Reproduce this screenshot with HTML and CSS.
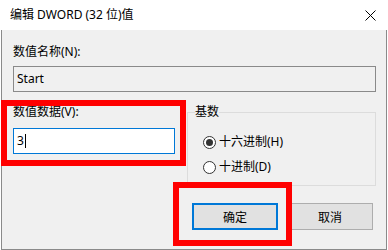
FILE: index.html
```html
<!DOCTYPE html>
<html lang="zh-CN">
<head>
<meta charset="utf-8">
<title>编辑 DWORD (32 位)值</title>
<link rel="stylesheet" href="styles.css">
</head>
<body>
<div class="dialog">
  <div class="titlebar">
    <span class="title">编辑 DWORD (32 位)值</span>
    <svg class="close" width="11" height="11" viewBox="0 0 11 11" aria-hidden="true">
      <path d="M0.5 0.5 L10.5 10.5 M10.5 0.5 L0.5 10.5" stroke="#000" stroke-width="1" fill="none"/>
    </svg>
  </div>
  <div class="content">
    <div class="label">数值名称(N):</div>
    <div class="field readonly">Start</div>
    <div class="row">
      <div class="value-col">
        <div class="label">数值数据(V):</div>
        <div class="field edit">3<span class="caret"></span></div>
      </div>
      <fieldset class="group">
        <legend>基数</legend>
        <div class="radio"><span class="dot checked"></span><span>十六进制(H)</span></div>
        <div class="radio second"><span class="dot"></span><span>十进制(D)</span></div>
      </fieldset>
    </div>
    <div class="buttons">
      <div class="btn default">确定</div>
      <div class="btn">取消</div>
    </div>
  </div>
  <div class="mark mark-value"></div>
  <div class="mark mark-ok"></div>
</div>
</body>
</html>
```

FILE: styles.css
```css
html, body {
  margin: 0;
  padding: 0;
  background: #ffffff;
}

.dialog {
  position: relative;
  width: 388px;
  height: 250px;
  font-family: "Noto Sans", "Noto Sans CJK SC", sans-serif;
  font-size: 12px;
  color: #000;
  overflow: hidden;
}

.titlebar {
  height: 30px;
  background: #ffffff;
  display: flex;
  align-items: center;
  justify-content: space-between;
  padding: 0 12px 0 10px;
  box-sizing: border-box;
}

.title {
  line-height: 16px;
}

.close {
  display: block;
  margin-top: 0;
}

.content {
  margin-left: 1px;
  width: 386px;
  height: 220px;
  box-sizing: border-box;
  border: 1px solid #8a8a8a;
  border-top: 0;
  background: #f0f0f0;
  padding: 14px 10px 0 11px;
}

.label {
  line-height: 16px;
  height: 16px;
}

.field {
  margin-top: 6px;
  height: 26px;
  box-sizing: border-box;
  border: 1px solid #8a8a8a;
  padding-left: 3px;
  line-height: 24px;
  display: flex;
  align-items: center;
}

.field.readonly {
  background: #f0f0f0;
}

.field.edit {
  margin-top: 8px;
  background: #ffffff;
  border-color: #0078d7;
}

.caret {
  display: inline-block;
  width: 1px;
  height: 14px;
  background: #000;
  margin-left: 1px;
}

.row {
  display: flex;
  gap: 12px;
}

.value-col {
  width: 162px;
  padding-top: 12px;
}

.group {
  flex: 1;
  min-width: 0;
  margin: 12px 0 0 0;
  padding: 14px 0 10px 7px;
  border: 1px solid #dcdcdc;
}

.group legend {
  padding: 0;
  line-height: 16px;
}

.radio {
  display: flex;
  align-items: center;
  height: 16px;
  line-height: 16px;
  margin-left: 8px;
  gap: 3px;
}

.radio.second {
  margin-top: 9px;
}

.dot {
  width: 13px;
  height: 13px;
  box-sizing: border-box;
  border: 1px solid #333333;
  border-radius: 50%;
  background: #ffffff;
  display: flex;
  align-items: center;
  justify-content: center;
  flex: none;
}

.dot.checked::after {
  content: "";
  width: 7px;
  height: 7px;
  border-radius: 50%;
  background: #333333;
}

.buttons {
  display: flex;
  justify-content: flex-end;
  gap: 9px;
  margin-top: 17px;
  margin-right: 3px;
}

.btn {
  width: 86px;
  height: 27px;
  box-sizing: border-box;
  border: 1px solid #adadad;
  background: #e1e1e1;
  display: flex;
  align-items: center;
  justify-content: center;
}

.btn.default {
  border: 2px solid #0078d7;
}

.mark {
  position: absolute;
  box-sizing: border-box;
  border: 6px solid #ff0000;
}

.mark-value {
  left: 1px;
  top: 100px;
  width: 185px;
  height: 66px;
}

.mark-ok {
  left: 173px;
  top: 182px;
  width: 119px;
  height: 64px;
}
```
